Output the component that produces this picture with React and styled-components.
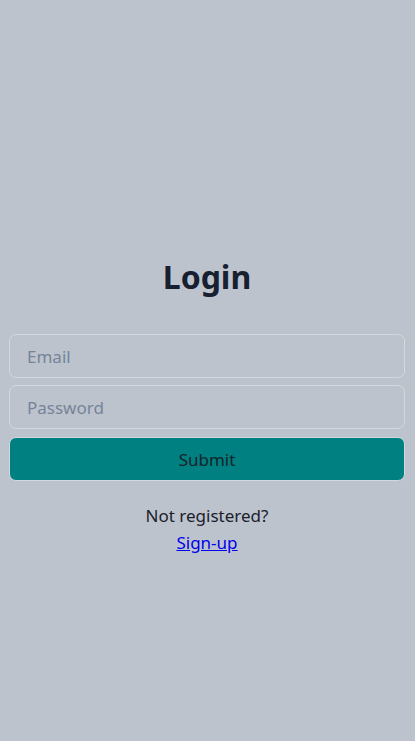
import styled, { createGlobalStyle } from "styled-components";

const GlobalStyle = createGlobalStyle`
  html, body {
    margin: 0;
    padding: 0;
    background: #bcc3cc;
    font-family: "Noto Sans", "Open Sans", sans-serif;
  }
`;

/* --- STYLES --- */
const Page = styled.div`
  min-height: 741px;
  background: #bcc3cc;
  box-sizing: border-box;
  padding: 253px 10px 0 9px;
`;

const Title = styled.h1`
  margin: 0 0 33px;
  text-align: center;
  font-size: 32px;
  font-weight: 700;
  line-height: 48px;
  color: #172030;
`;

const Form = styled.form`
  display: flex;
  flex-direction: column;
  gap: 7px;
`;

const Input = styled.input`
  box-sizing: border-box;
  width: 100%;
  height: 44px;
  padding: 0 17px;
  border: 1.5px solid #d3d8de;
  border-radius: 7px;
  background: transparent;
  font-family: inherit;
  font-size: 17px;
  color: #1f2937;
  outline: none;

  &::placeholder {
    color: #76839a;
  }
`;

const Button = styled.button`
  box-sizing: border-box;
  width: 100%;
  height: 44px;
  margin-top: 1px;
  border: 1.5px solid #d3d8de;
  border-radius: 7px;
  background: #008080;
  font-family: inherit;
  font-size: 17px;
  color: #17232a;
  cursor: pointer;
`;

const Footer = styled.div`
  margin-top: 21px;
  display: flex;
  flex-direction: column;
  align-items: center;
  font-size: 17px;
  line-height: 27px;
  color: #1a202c;
`;

const Link = styled.a`
  color: #0000ee;
  text-decoration: underline;
`;

/* --- COMPONENT --- */
export default function App() {
  return (
    <>
      <GlobalStyle />
      <Page>
        <Title>Login</Title>
        <Form onSubmit={(e) => e.preventDefault()}>
          <Input type="email" placeholder="Email" />
          <Input type="password" placeholder="Password" />
          <Button type="submit">Submit</Button>
        </Form>
        <Footer>
          <span>Not registered?</span>
          <Link href="#">Sign-up</Link>
        </Footer>
      </Page>
    </>
  );
}
